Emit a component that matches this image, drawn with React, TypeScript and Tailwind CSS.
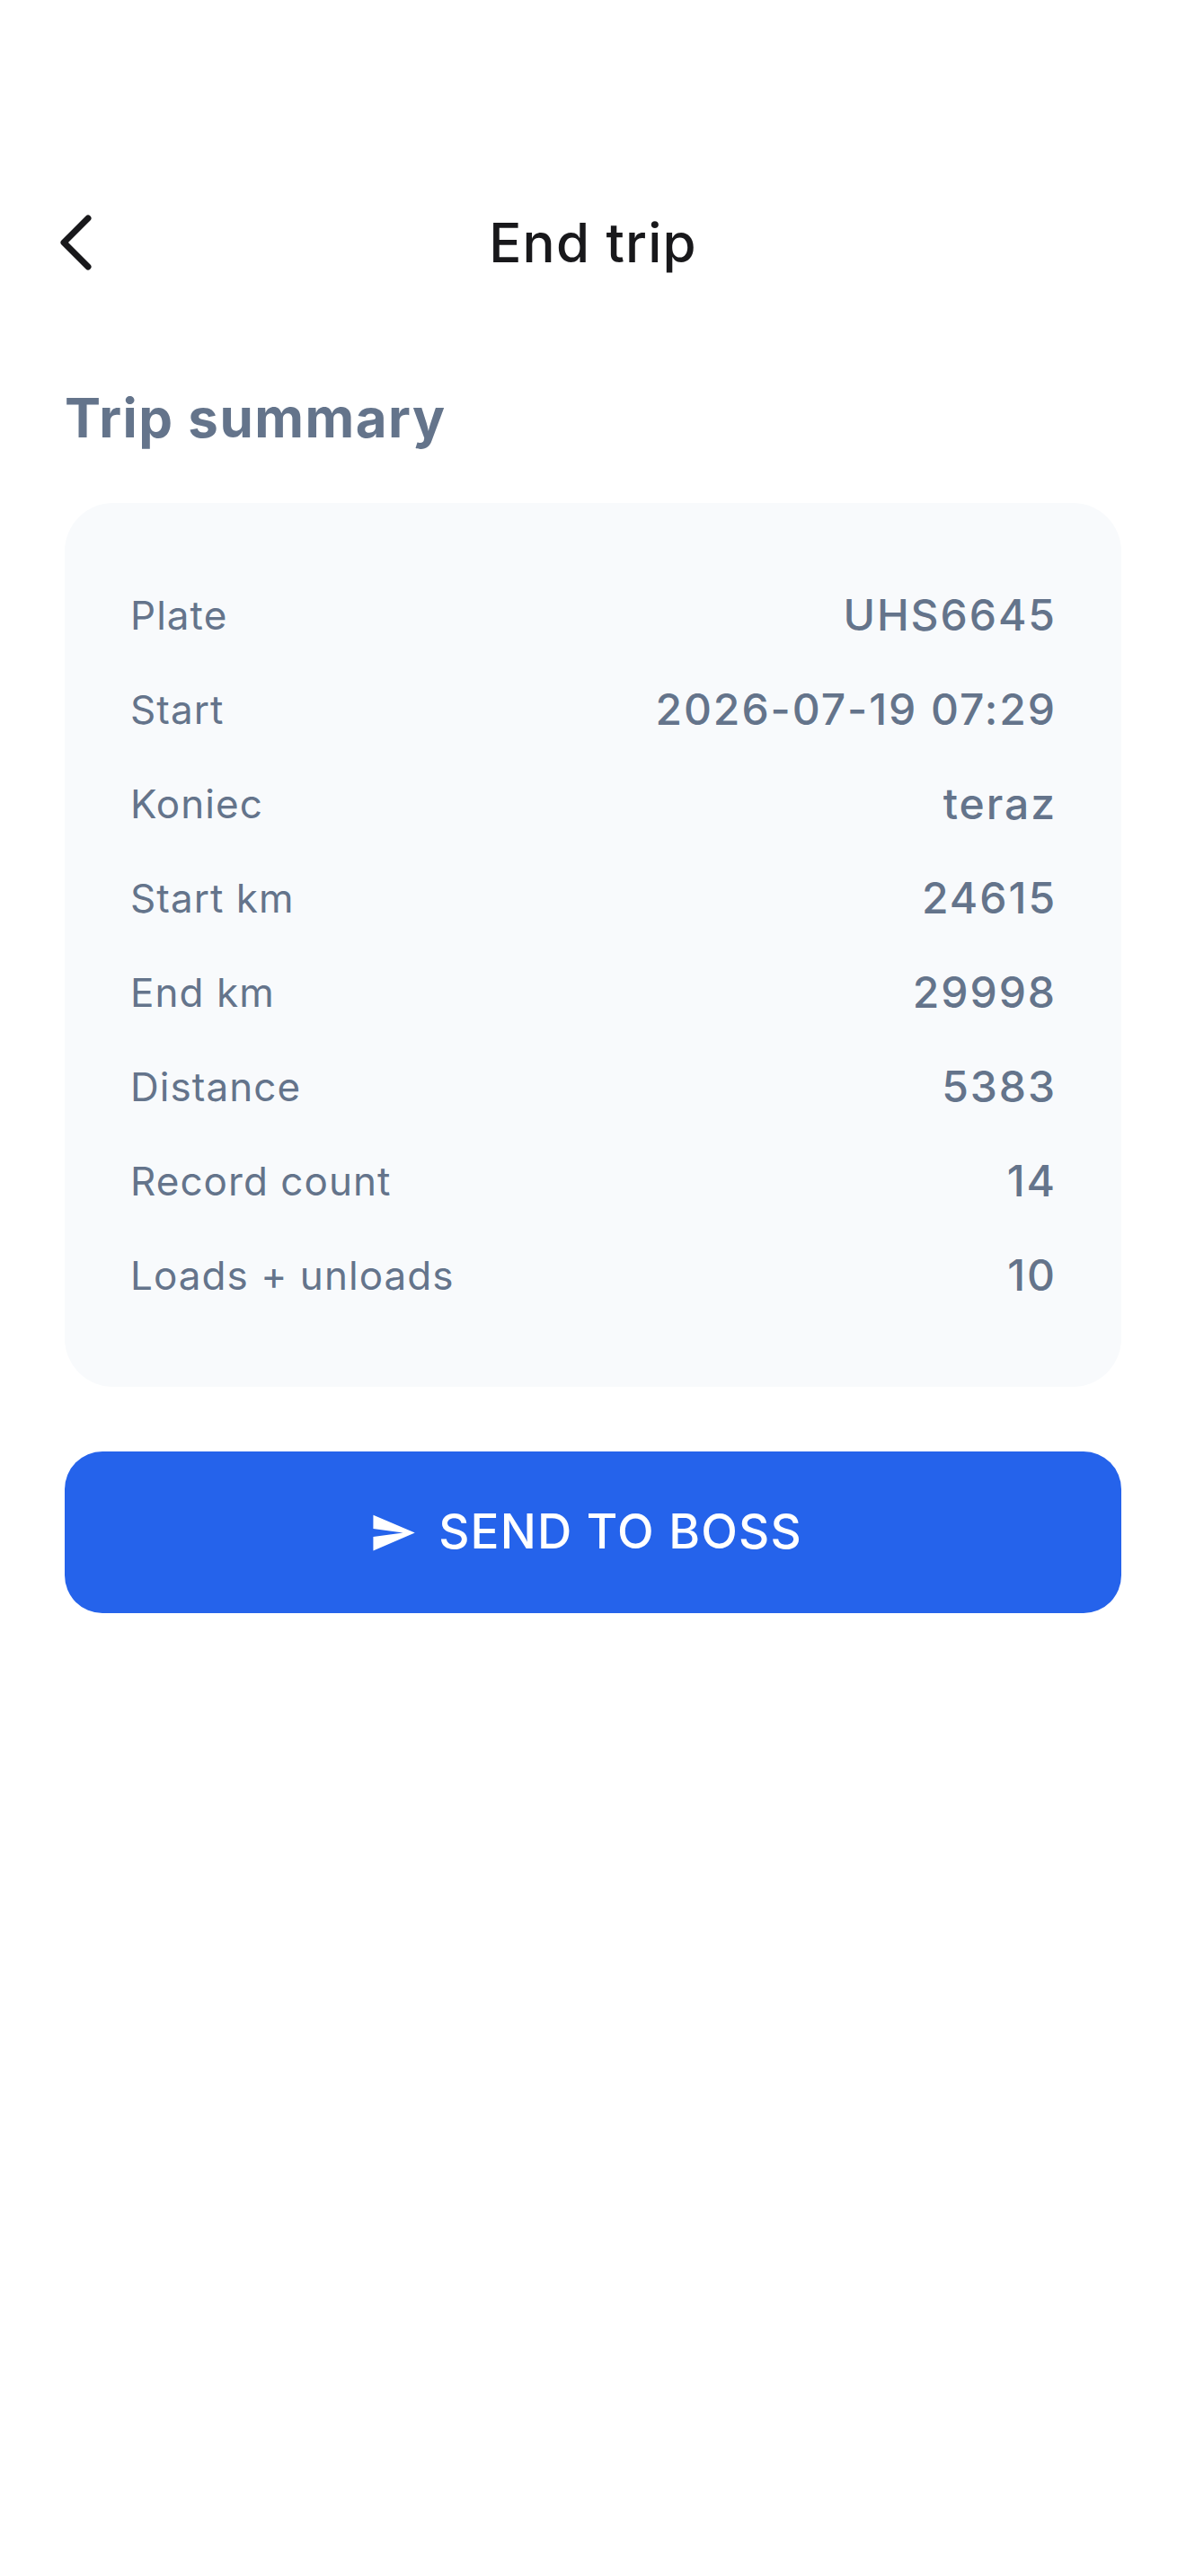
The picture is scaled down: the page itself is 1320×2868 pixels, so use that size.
const rows: [string, string][] = [
  ["Plate", "UHS6645"],
  ["Start", "2026-07-19 07:29"],
  ["Koniec", "teraz"],
  ["Start km", "24615"],
  ["End km", "29998"],
  ["Distance", "5383"],
  ["Record count", "14"],
  ["Loads + unloads", "10"],
];

export default function App() {
  return (
    <div className="flex min-h-[2868px] w-[1320px] flex-col bg-white px-[72px] font-['Inter',sans-serif]">
      <header className="relative mt-[204px] flex h-[132px] items-center justify-center">
        <button className="absolute left-[-12px] top-[30px] flex h-[72px] w-[72px] items-center justify-center" aria-label="Back">
          <svg width="72" height="72" viewBox="0 0 72 72" fill="none">
            <path d="M38 9 L11 36 L38 63" stroke="#18181b" strokeWidth="7" strokeLinecap="round" strokeLinejoin="round" />
          </svg>
        </button>
        <h1 className="text-[60px] font-medium leading-[72px] tracking-[1.2px] text-[#18181b]">End trip</h1>
      </header>
      <h2 className="mt-[93px] text-[60px] font-bold leading-[72px] tracking-[1.5px] text-[#64748b]">Trip summary</h2>
      <section className="mt-[59px] flex flex-col rounded-[54px] bg-[#f8fafc] p-[72px]">
        {rows.map(([label, value]) => (
          <div key={label} className="flex h-[105px] items-center justify-between">
            <span className="pl-[1px] text-[44px] tracking-[1.05px] text-[#64748b]">{label}</span>
            <span className="text-[48px] font-medium tracking-[1.95px] text-[#64748b]">{value}</span>
          </div>
        ))}
      </section>
      <button className="mt-[72px] flex h-[180px] items-center justify-center gap-[24px] rounded-[42px] bg-[#2563eb] pr-[16px]">
        <svg width="53" height="53" viewBox="0 0 24 24" fill="#ffffff">
          <path d="M2.01 21L23 12 2.01 3 2 10l15 2-15 2z" />
        </svg>
        <span className="text-[53px] font-medium tracking-[1.2px] text-white">SEND TO BOSS</span>
      </button>
    </div>
  );
}
